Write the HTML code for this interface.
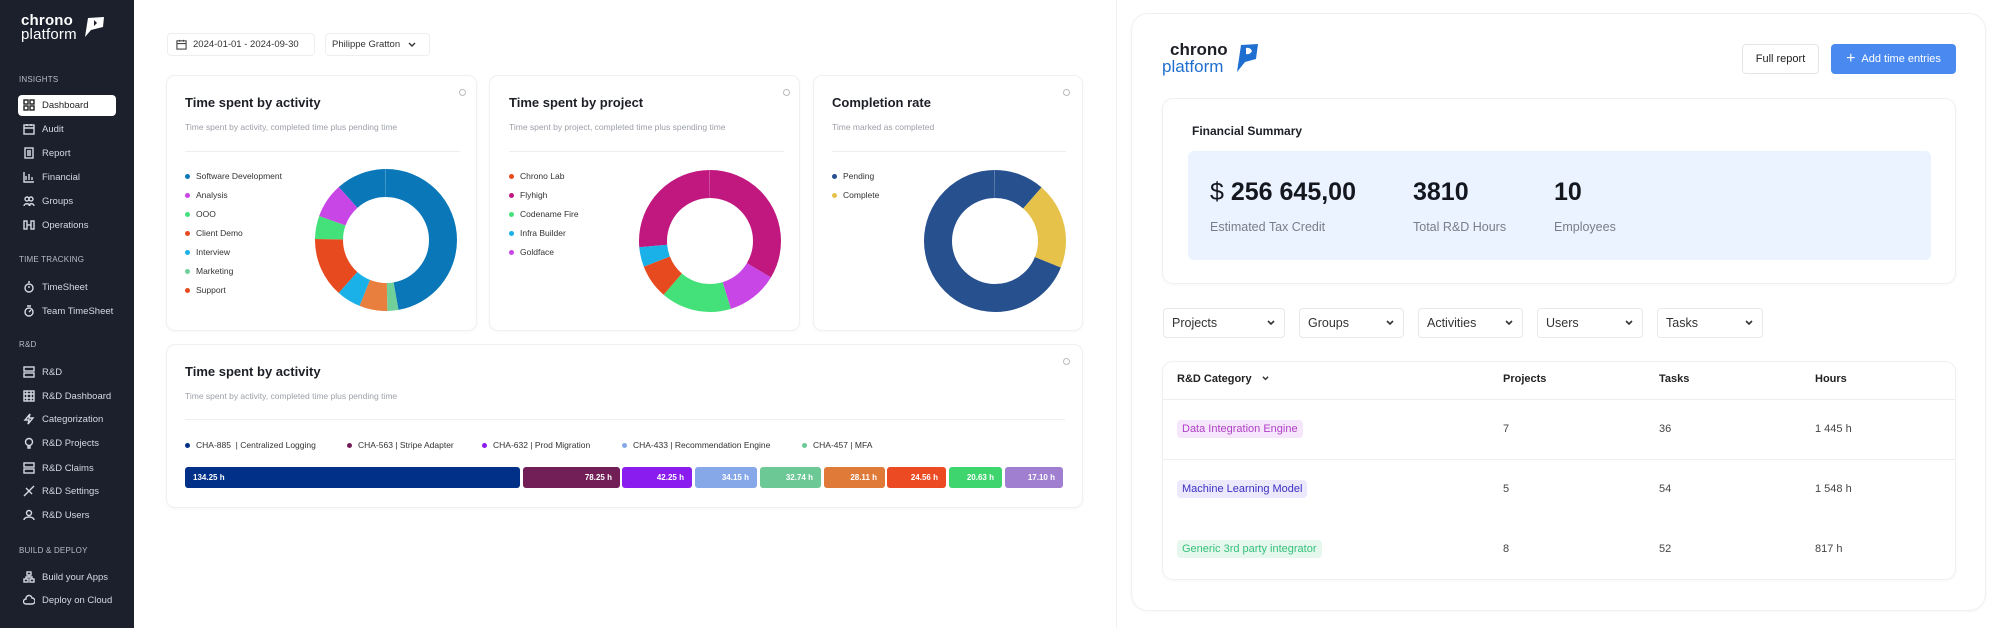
<!DOCTYPE html>
<html><head><meta charset="utf-8"><style>
*{margin:0;padding:0;box-sizing:border-box}
body{width:1999px;height:628px;background:#fff;font-family:"Liberation Sans",sans-serif;position:relative;overflow:hidden;color:#1d1f27}
.a{position:absolute}
#sb{left:0;top:0;width:134px;height:628px;background:#1c1f2c}
.sec{position:absolute;left:19px;font-size:8px;color:#b8bcc8;letter-spacing:.2px}
.it{position:absolute;left:23px;font-size:9.5px;color:#d6d9e2;display:flex;align-items:center;gap:7px}
.it svg{width:12px;height:12px;stroke:#d6d9e2;fill:none;stroke-width:1.4}
.card{position:absolute;background:#fff;border-radius:8px;box-shadow:0 0 0 1px #eef0f3,0 1px 4px rgba(0,0,0,.06)}
.t{position:absolute;font-size:13px;font-weight:bold;color:#1d1f27}
.st{position:absolute;font-size:8.5px;color:#9ca0a8}
.dv{position:absolute;height:1px;background:#eceef1}
.lg{position:absolute;font-size:8.5px;color:#333;display:flex;align-items:center}
.lg i{display:inline-block;width:5px;height:5px;border-radius:50%;margin-right:6px}
.info{position:absolute;width:7px;height:7px;border-radius:50%;border:1px solid #bbb}
.bar{position:absolute;top:467px;height:21px;border-radius:3px;color:#fff;font-size:8px;font-weight:bold;display:flex;align-items:center;justify-content:flex-end;padding:0 8px}
.flt{position:absolute;top:308px;height:30px;border:1px solid #e6e8ec;border-radius:4px;font-size:12.5px;color:#333;display:flex;align-items:center;justify-content:space-between;padding:0 8px}
.flt svg{width:10px;height:10px}
.th{position:absolute;top:373px;font-size:11px;font-weight:bold;color:#222}
.td{position:absolute;font-size:11px;color:#444}
.tag{position:absolute;left:1177px;font-size:11px;padding:3px 5px;border-radius:4px}
</style></head><body>
<div id="sb" class="a">
 <div class="a" style="left:21px;top:14px;color:#fff;font-weight:bold;font-size:15px;line-height:14px;letter-spacing:.2px">chrono<br><span style="font-weight:normal">platform</span></div>
 <svg class="a" style="left:82px;top:15px" width="24" height="24" viewBox="0 0 24 24"><path d="M6 3 L22 2 L21 12 L9 15 L3 22 Z" fill="#fff"/><path d="M12 5 l3 3 l-3 3 z" fill="#1c1f2c"/></svg>
 <div class="sec" style="top:75px">INSIGHTS</div>
 <div class="a" style="left:18px;top:95px;width:98px;height:21px;background:#fff;border-radius:4px"></div>
 <div class="it" style="top:99px;color:#222"><svg viewBox="0 0 12 12" style="stroke:#222"><rect x="1" y="1" width="4" height="4"/><rect x="7" y="1" width="4" height="4"/><rect x="1" y="7" width="4" height="4"/><rect x="7" y="7" width="4" height="4"/></svg>Dashboard</div>
 <div class="it" style="top:123px"><svg viewBox="0 0 12 12"><rect x="1" y="2" width="10" height="9"/><path d="M1 5h10M4 1v2M8 1v2"/></svg>Audit</div>
 <div class="it" style="top:147px"><svg viewBox="0 0 12 12"><rect x="2" y="1" width="8" height="10"/><path d="M4 4h4M4 6h4M4 8h4"/></svg>Report</div>
 <div class="it" style="top:171px"><svg viewBox="0 0 12 12"><path d="M1 1v10h10M3 9V5M6 9V3M9 9V6"/></svg>Financial</div>
 <div class="it" style="top:195px"><svg viewBox="0 0 12 12"><circle cx="4" cy="4" r="2"/><circle cx="8" cy="4" r="2"/><path d="M1 11c0-3 6-3 6 0M6 11c0-3 5-3 5 0"/></svg>Groups</div>
 <div class="it" style="top:219px"><svg viewBox="0 0 12 12"><rect x="1" y="2" width="3" height="8"/><rect x="8" y="2" width="3" height="8"/><path d="M4 6h4"/></svg>Operations</div>
 <div class="sec" style="top:255px">TIME TRACKING</div>
 <div class="it" style="top:281px"><svg viewBox="0 0 12 12"><circle cx="6" cy="7" r="4"/><path d="M6 7V5M5 1h2"/></svg>TimeSheet</div>
 <div class="it" style="top:305px"><svg viewBox="0 0 12 12"><circle cx="6" cy="7" r="4"/><path d="M6 7l2-2M4 1h4"/></svg>Team TimeSheet</div>
 <div class="sec" style="top:340px">R&amp;D</div>
 <div class="it" style="top:366px"><svg viewBox="0 0 12 12"><rect x="1" y="1" width="10" height="4"/><rect x="1" y="7" width="10" height="4"/></svg>R&amp;D</div>
 <div class="it" style="top:390px"><svg viewBox="0 0 12 12"><rect x="1" y="1" width="10" height="10"/><path d="M1 4h10M1 8h10M4 1v10M8 1v10"/></svg>R&amp;D Dashboard</div>
 <div class="it" style="top:413px"><svg viewBox="0 0 12 12"><path d="M7 1L2 7h4l-1 4 5-6H6z"/></svg>Categorization</div>
 <div class="it" style="top:437px"><svg viewBox="0 0 12 12"><circle cx="6" cy="5" r="3.5"/><path d="M5 9h2v2H5z"/></svg>R&amp;D Projects</div>
 <div class="it" style="top:462px"><svg viewBox="0 0 12 12"><rect x="1" y="1" width="10" height="4"/><rect x="1" y="7" width="10" height="4"/></svg>R&amp;D Claims</div>
 <div class="it" style="top:485px"><svg viewBox="0 0 12 12"><path d="M1 11L11 1M3 3l6 6"/></svg>R&amp;D Settings</div>
 <div class="it" style="top:509px"><svg viewBox="0 0 12 12"><circle cx="6" cy="4" r="2.5"/><path d="M1 11c0-4 10-4 10 0"/></svg>R&amp;D Users</div>
 <div class="sec" style="top:546px">BUILD &amp; DEPLOY</div>
 <div class="it" style="top:571px"><svg viewBox="0 0 12 12"><rect x="4" y="1" width="4" height="3"/><rect x="1" y="8" width="4" height="3"/><rect x="7" y="8" width="4" height="3"/><path d="M6 4v2M3 8V6h6v2"/></svg>Build your Apps</div>
 <div class="it" style="top:594px"><svg viewBox="0 0 12 12"><path d="M3 10h6a3 3 0 0 0 0-6 3 3 0 0 0-6 1 2.5 2.5 0 0 0 0 5z"/></svg>Deploy on Cloud</div>
</div>

<div class="a" style="left:167px;top:33px;width:148px;height:23px;border:1px solid #eceef1;border-radius:4px;font-size:9.5px;color:#333;display:flex;align-items:center;padding-left:8px;gap:6px"><svg width="11" height="11" viewBox="0 0 12 12" fill="none" stroke="#444" stroke-width="1.2"><rect x="1" y="2" width="10" height="9"/><path d="M1 5h10M4 1v2M8 1v2"/></svg>2024-01-01 - 2024-09-30</div>
<div class="a" style="left:325px;top:33px;width:105px;height:23px;border:1px solid #eceef1;border-radius:4px;font-size:9.5px;color:#333;display:flex;align-items:center;padding-left:6px;gap:8px">Philippe Gratton <svg width="8" height="6" viewBox="0 0 8 6" fill="none" stroke="#333" stroke-width="1.4"><path d="M1 1l3 3 3-3"/></svg></div>

<div class="card" style="left:167px;top:76px;width:309px;height:254px"></div>
<div class="info" style="left:459px;top:89px"></div>
<div class="t" style="left:185px;top:95px">Time spent by activity</div>
<div class="st" style="left:185px;top:122px">Time spent by activity, completed time plus pending time</div>
<div class="dv" style="left:185px;top:151px;width:275px"></div>
<div class="lg" style="left:185px;top:171px"><i style="background:#0a78b8"></i>Software Development</div>
<div class="lg" style="left:185px;top:190px"><i style="background:#c846e6"></i>Analysis</div>
<div class="lg" style="left:185px;top:209px"><i style="background:#44e07a"></i>OOO</div>
<div class="lg" style="left:185px;top:228px"><i style="background:#e84a1f"></i>Client Demo</div>
<div class="lg" style="left:185px;top:247px"><i style="background:#1ab0e8"></i>Interview</div>
<div class="lg" style="left:185px;top:266px"><i style="background:#6fd09a"></i>Marketing</div>
<div class="lg" style="left:185px;top:285px"><i style="background:#e84a1f"></i>Support</div>
<svg class="a" style="left:306px;top:160px" width="160" height="160" viewBox="-80 -80 160 160"><g transform="rotate(-90)" fill="none" stroke-width="28">
<circle r="57" pathLength="360" stroke="#0a78b8" stroke-dasharray="170 360" stroke-dashoffset="0"/>
<circle r="57" pathLength="360" stroke="#0a78b8" stroke-dasharray="41.5 360" stroke-dashoffset="-318.5"/>
<circle r="57" pathLength="360" stroke="#6fd09a" stroke-dasharray="9 360" stroke-dashoffset="-170"/>
<circle r="57" pathLength="360" stroke="#e87f3f" stroke-dasharray="23 360" stroke-dashoffset="-179"/>
<circle r="57" pathLength="360" stroke="#1ab0e8" stroke-dasharray="20 360" stroke-dashoffset="-202"/>
<circle r="57" pathLength="360" stroke="#e84a1f" stroke-dasharray="49 360" stroke-dashoffset="-222"/>
<circle r="57" pathLength="360" stroke="#44e07a" stroke-dasharray="19 360" stroke-dashoffset="-271"/>
<circle r="57" pathLength="360" stroke="#c846e6" stroke-dasharray="28.5 360" stroke-dashoffset="-290"/>
</g></svg>

<div class="card" style="left:490px;top:76px;width:309px;height:254px"></div>
<div class="info" style="left:783px;top:89px"></div>
<div class="t" style="left:509px;top:95px">Time spent by project</div>
<div class="st" style="left:509px;top:122px">Time spent by project, completed time plus spending time</div>
<div class="dv" style="left:509px;top:151px;width:275px"></div>
<div class="lg" style="left:509px;top:171px"><i style="background:#e84a1f"></i>Chrono Lab</div>
<div class="lg" style="left:509px;top:190px"><i style="background:#c0187f"></i>Flyhigh</div>
<div class="lg" style="left:509px;top:209px"><i style="background:#44e07a"></i>Codename Fire</div>
<div class="lg" style="left:509px;top:228px"><i style="background:#1ab0e8"></i>Infra Builder</div>
<div class="lg" style="left:509px;top:247px"><i style="background:#c846e6"></i>Goldface</div>
<svg class="a" style="left:630px;top:161px" width="160" height="160" viewBox="-80 -80 160 160"><g transform="rotate(-90)" fill="none" stroke-width="28">
<circle r="57" pathLength="360" stroke="#c0187f" stroke-dasharray="95 360" stroke-dashoffset="-265"/>
<circle r="57" pathLength="360" stroke="#c0187f" stroke-dasharray="121 360" stroke-dashoffset="0"/>
<circle r="57" pathLength="360" stroke="#c846e6" stroke-dasharray="42 360" stroke-dashoffset="-121"/>
<circle r="57" pathLength="360" stroke="#44e07a" stroke-dasharray="58 360" stroke-dashoffset="-163"/>
<circle r="57" pathLength="360" stroke="#e84a1f" stroke-dasharray="28 360" stroke-dashoffset="-221"/>
<circle r="57" pathLength="360" stroke="#1ab0e8" stroke-dasharray="16 360" stroke-dashoffset="-249"/>
</g></svg>

<div class="card" style="left:814px;top:76px;width:268px;height:254px"></div>
<div class="info" style="left:1063px;top:89px"></div>
<div class="t" style="left:832px;top:95px">Completion rate</div>
<div class="st" style="left:832px;top:122px">Time marked as completed</div>
<div class="dv" style="left:832px;top:151px;width:234px"></div>
<div class="lg" style="left:832px;top:171px"><i style="background:#27508f"></i>Pending</div>
<div class="lg" style="left:832px;top:190px"><i style="background:#e6c24a"></i>Complete</div>
<svg class="a" style="left:915px;top:161px" width="160" height="160" viewBox="-80 -80 160 160"><g transform="rotate(-90)" fill="none" stroke-width="28">
<circle r="57" pathLength="360" stroke="#27508f" stroke-dasharray="248 360" stroke-dashoffset="-112"/>
<circle r="57" pathLength="360" stroke="#27508f" stroke-dasharray="41 360" stroke-dashoffset="0"/>
<circle r="57" pathLength="360" stroke="#e6c24a" stroke-dasharray="71 360" stroke-dashoffset="-41"/>
</g></svg>

<div class="card" style="left:167px;top:345px;width:915px;height:162px"></div>
<div class="info" style="left:1063px;top:358px"></div>
<div class="t" style="left:185px;top:364px">Time spent by activity</div>
<div class="st" style="left:185px;top:391px">Time spent by activity, completed time plus pending time</div>
<div class="dv" style="left:185px;top:419px;width:880px"></div>
<div class="lg" style="left:185px;top:440px"><i style="background:#003087"></i>CHA-885 &nbsp;| Centralized Logging</div>
<div class="lg" style="left:347px;top:440px"><i style="background:#731f57"></i>CHA-563 | Stripe Adapter</div>
<div class="lg" style="left:482px;top:440px"><i style="background:#8a1cf0"></i>CHA-632 | Prod Migration</div>
<div class="lg" style="left:622px;top:440px"><i style="background:#86a8e8"></i>CHA-433 | Recommendation Engine</div>
<div class="lg" style="left:802px;top:440px"><i style="background:#6cc996"></i>CHA-457 | MFA</div>
<div class="bar" style="left:185px;width:335px;background:#003087;justify-content:flex-start">134.25 h</div>
<div class="bar" style="left:523px;width:97px;background:#731f57">78.25 h</div>
<div class="bar" style="left:622px;width:70px;background:#8a1cf0">42.25 h</div>
<div class="bar" style="left:695px;width:62px;background:#86a8e8">34.15 h</div>
<div class="bar" style="left:760px;width:61px;background:#6cc996">32.74 h</div>
<div class="bar" style="left:824px;width:61px;background:#e07a38">28.11 h</div>
<div class="bar" style="left:887px;width:59px;background:#ec4a22">24.56 h</div>
<div class="bar" style="left:949px;width:53px;background:#3ed46e">20.63 h</div>
<div class="bar" style="left:1005px;width:58px;background:#a07fd0">17.10 h</div>

<div class="a" style="left:1116px;top:0;width:1px;height:628px;background:#eef0f2"></div>

<div class="card" style="left:1132px;top:14px;width:853px;height:596px;border-radius:16px"></div>
<div class="a" style="left:1170px;top:41px;font-size:17px;font-weight:bold;line-height:17px">chrono</div>
<div class="a" style="left:1162px;top:58px;font-size:17px;color:#1f6fd0;line-height:17px">platform</div>
<svg class="a" style="left:1234px;top:43px" width="26" height="30" viewBox="0 0 26 30"><path d="M7 2 L24 1 L22 16 L11 19 L3 29 Z" fill="#1f6fd0"/><path d="M12 5 q4 -1 6 3 q-2 4 -6 3 z" fill="#fff"/></svg>
<div class="a" style="left:1742px;top:44px;width:77px;height:30px;border:1px solid #e3e5e9;border-radius:4px;font-size:11px;display:flex;align-items:center;justify-content:center;color:#222">Full report</div>
<div class="a" style="left:1831px;top:44px;width:125px;height:30px;background:#4a8af0;border-radius:4px;font-size:11px;color:#fff;display:flex;align-items:center;justify-content:center;gap:6px"><span style="font-size:16px;line-height:10px">+</span>Add time entries</div>

<div class="card" style="left:1163px;top:99px;width:792px;height:184px;border-radius:10px"></div>
<div class="a" style="left:1192px;top:124px;font-size:12px;font-weight:bold">Financial Summary</div>
<div class="a" style="left:1188px;top:151px;width:743px;height:109px;background:#eaf3ff;border-radius:6px"></div>
<div class="a" style="left:1210px;top:178px;font-size:25px;font-weight:bold;color:#15171f"><span style="font-weight:normal">$</span> 256 645,00</div>
<div class="a" style="left:1413px;top:178px;font-size:25px;font-weight:bold;color:#15171f">3810</div>
<div class="a" style="left:1554px;top:178px;font-size:25px;font-weight:bold;color:#15171f">10</div>
<div class="a" style="left:1210px;top:220px;font-size:12.5px;color:#7a7e88">Estimated Tax Credit</div>
<div class="a" style="left:1413px;top:220px;font-size:12.5px;color:#7a7e88">Total R&amp;D Hours</div>
<div class="a" style="left:1554px;top:220px;font-size:12.5px;color:#7a7e88">Employees</div>

<div class="flt" style="left:1163px;width:122px">Projects<svg viewBox="0 0 10 10" fill="none" stroke="#333" stroke-width="1.6"><path d="M2 3l3 3 3-3"/></svg></div>
<div class="flt" style="left:1299px;width:105px">Groups<svg viewBox="0 0 10 10" fill="none" stroke="#333" stroke-width="1.6"><path d="M2 3l3 3 3-3"/></svg></div>
<div class="flt" style="left:1418px;width:105px">Activities<svg viewBox="0 0 10 10" fill="none" stroke="#333" stroke-width="1.6"><path d="M2 3l3 3 3-3"/></svg></div>
<div class="flt" style="left:1537px;width:106px">Users<svg viewBox="0 0 10 10" fill="none" stroke="#333" stroke-width="1.6"><path d="M2 3l3 3 3-3"/></svg></div>
<div class="flt" style="left:1657px;width:106px">Tasks<svg viewBox="0 0 10 10" fill="none" stroke="#333" stroke-width="1.6"><path d="M2 3l3 3 3-3"/></svg></div>

<div class="card" style="left:1163px;top:362px;width:792px;height:217px;border-radius:10px"></div>
<div class="th" style="left:1177px">R&amp;D Category <svg width="9" height="7" viewBox="0 0 10 8" fill="none" stroke="#333" stroke-width="1.6" style="margin-left:6px"><path d="M2 2l3 3 3-3"/></svg></div>
<div class="th" style="left:1503px">Projects</div>
<div class="th" style="left:1659px">Tasks</div>
<div class="th" style="left:1815px">Hours</div>
<div class="dv" style="left:1163px;top:399px;width:792px"></div>
<div class="dv" style="left:1163px;top:459px;width:792px"></div>
<div class="tag" style="top:420px;background:#f6e6fb;color:#b040c8">Data Integration Engine</div>
<div class="tag" style="top:480px;background:#ece9fd;color:#3b2fc0">Machine Learning Model</div>
<div class="tag" style="top:540px;background:#e6f8ee;color:#34c07a">Generic 3rd party integrator</div>
<div class="td" style="left:1503px;top:423px">7</div><div class="td" style="left:1659px;top:423px">36</div><div class="td" style="left:1815px;top:423px">1 445 h</div>
<div class="td" style="left:1503px;top:483px">5</div><div class="td" style="left:1659px;top:483px">54</div><div class="td" style="left:1815px;top:483px">1 548 h</div>
<div class="td" style="left:1503px;top:543px">8</div><div class="td" style="left:1659px;top:543px">52</div><div class="td" style="left:1815px;top:543px">817 h</div>
</body></html>
